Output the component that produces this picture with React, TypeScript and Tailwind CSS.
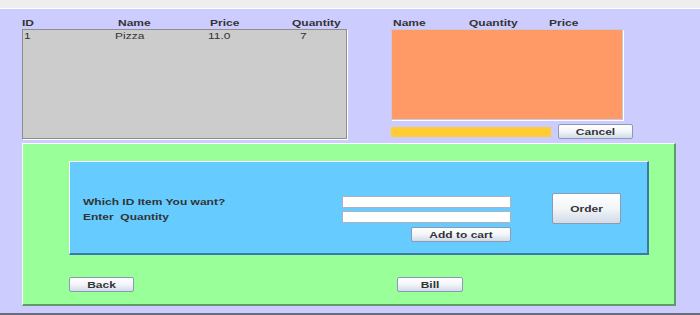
import React from 'react'

// text in the shot is squashed vertically, so flatten glyphs a bit
function T({ children, className = '' }: { children: React.ReactNode; className?: string }) {
    return <span className={`inline-block scale-y-[0.7] leading-none whitespace-pre ${className}`}>{children}</span>
}

function Btn({ label, className = '' }: { label: string; className?: string }) {
    return (
        <button className={`flex items-center justify-center border border-[#8a9bb3] rounded-[2px] bg-linear-to-b from-white via-[#f2f5f9] to-[#d3dbe7] font-bold text-[12px] text-[#333] ${className}`}>
            <T>{label}</T>
        </button>
    )
}

export default function App() {
    return (
        <div className="w-[700px] h-[315px] bg-[#ccccff] flex flex-col font-['Liberation_Sans',Arial,sans-serif] text-[12px] text-[#333] overflow-hidden">
            {/* window strip */}
            <div className="h-[9px] shrink-0 bg-[#eeeeee] border-b border-white" />

            {/* menu table + cart */}
            <div className="flex shrink-0 h-[134px] pl-[22px] pt-[7px]">
                <div className="w-[325px] flex flex-col">
                    <div className="h-[13px] grid grid-cols-[96px_92px_82px_1fr] items-center font-bold">
                        <T>ID</T>
                        <T>Name</T>
                        <T>Price</T>
                        <T>Quantity</T>
                    </div>
                    <div className="h-[110px] bg-[#cccccc] border border-[#8e8e8e] shadow-[1px_1px_0_#fff]">
                        <div className="h-[10px] grid grid-cols-[91px_93px_92px_1fr] items-center pl-[1px]">
                            <T>1</T>
                            <T>Pizza</T>
                            <T>11.0</T>
                            <T>7</T>
                        </div>
                    </div>
                </div>

                <div className="ml-[44px] w-[243px] flex flex-col">
                    <div className="h-[13px] grid grid-cols-[76px_80px_1fr] items-center pl-[2px] font-bold">
                        <T>Name</T>
                        <T>Quantity</T>
                        <T>Price</T>
                    </div>
                    <div className="w-[232px] h-[91px] bg-[#ff9966] border border-[#c9c9d6] shadow-[1px_1px_0_#fff]" />
                    <div className="flex items-center mt-[4px]">
                        <div className="w-[160px] h-[10px] bg-[#ffcc33]" />
                        <Btn label="Cancel" className="ml-[7px] w-[75px] h-[15px]" />
                    </div>
                </div>
            </div>

            {/* order panel */}
            <div className="ml-[22px] w-[654px] h-[163px] shrink-0 bg-[#99ff99] border-t border-l border-t-white border-l-white border-r-2 border-b-2 border-r-[#5f9a6a] border-b-[#5f9a6a] pl-[46px] pt-[17px] flex flex-col">
                <div className="w-[580px] h-[94px] bg-[#66ccff] border-t border-l border-t-white border-l-white border-r-2 border-b-2 border-r-[#3d79a8] border-b-[#3d79a8] flex pl-[13px] pt-[31px]">
                    <div className="w-[259px] flex flex-col gap-[3px] pt-[3px] font-bold">
                        <div className="h-[12px] flex items-center"><T>Which ID Item You want?</T></div>
                        <div className="h-[12px] flex items-center"><T>Enter  Quantity</T></div>
                    </div>
                    <div className="w-[169px] flex flex-col pt-[3px]">
                        <input className="h-[12px] bg-white border border-[#a9b3c4] outline-none" />
                        <input className="h-[12px] mt-[3px] bg-white border border-[#a9b3c4] outline-none" />
                        <Btn label="Add to cart" className="self-end mt-[4px] w-[100px] h-[15px]" />
                    </div>
                    <Btn label="Order" className="ml-[41px] w-[69px] h-[31px]" />
                </div>

                <div className="flex mt-[22px]">
                    <Btn label="Back" className="w-[65px] h-[15px]" />
                    <Btn label="Bill" className="ml-[263px] w-[66px] h-[15px]" />
                </div>
            </div>

            <div className="mt-auto h-[2px] bg-[#6b6b7b]" />
        </div>
    )
}
